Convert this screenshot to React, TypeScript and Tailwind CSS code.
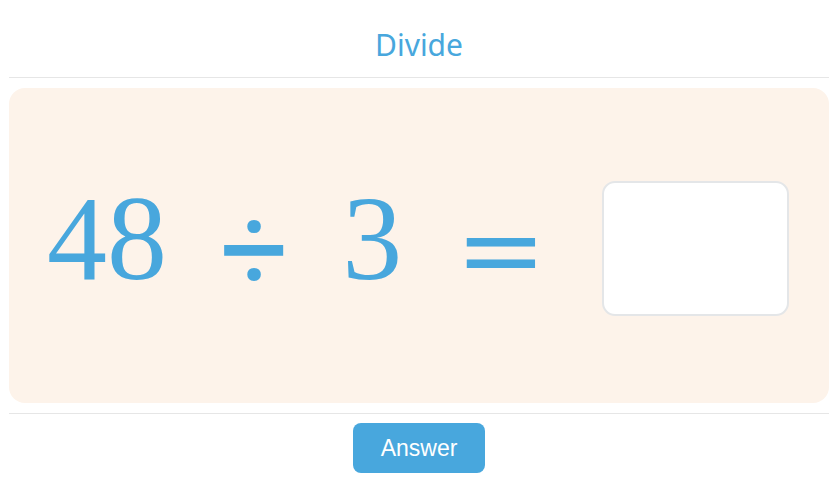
export default function App() {
  return (
    <div className="w-[840px] h-[501px] bg-white pl-[9px] pr-[11px] flex flex-col">
      <header className="h-[78px] shrink-0 border-b border-[#e6e6e6] flex items-start justify-center pt-[30px]">
        <h1 className="text-[30px] text-[#48a7dd] leading-none font-normal font-['Noto_Sans',sans-serif]">
          Divide
        </h1>
      </header>

      <main className="mt-[10px] h-[315px] shrink-0 rounded-[16px] bg-[#fdf3ea] flex items-center pl-[38px] text-[#48a7dd] leading-none">
        <span className="text-[120px] -mt-[13px] font-['Liberation_Serif',serif]">48</span>
        <span className="ml-[53px] mt-[9px] text-[121px] font-['Roboto',sans-serif]">÷</span>
        <span className="ml-[53px] -mt-[13px] text-[120px] font-['Liberation_Serif',serif]">3</span>
        <span className="ml-[53px] mt-[7px] text-[109px] font-['DejaVu_Serif',serif]">=</span>
        <div className="ml-[56px] mt-[6px] w-[187px] h-[135px] rounded-[13px] border-2 border-[#e4e6e8] bg-white" />
      </main>

      <footer className="mt-[10px] border-t border-[#e6e6e6] flex justify-center pt-[9px]">
        <button className="w-[132px] h-[50px] rounded-[8px] bg-[#48a7dd] text-white text-[23px] font-['Liberation_Sans',Arial,sans-serif]">
          Answer
        </button>
      </footer>
    </div>
  );
}
